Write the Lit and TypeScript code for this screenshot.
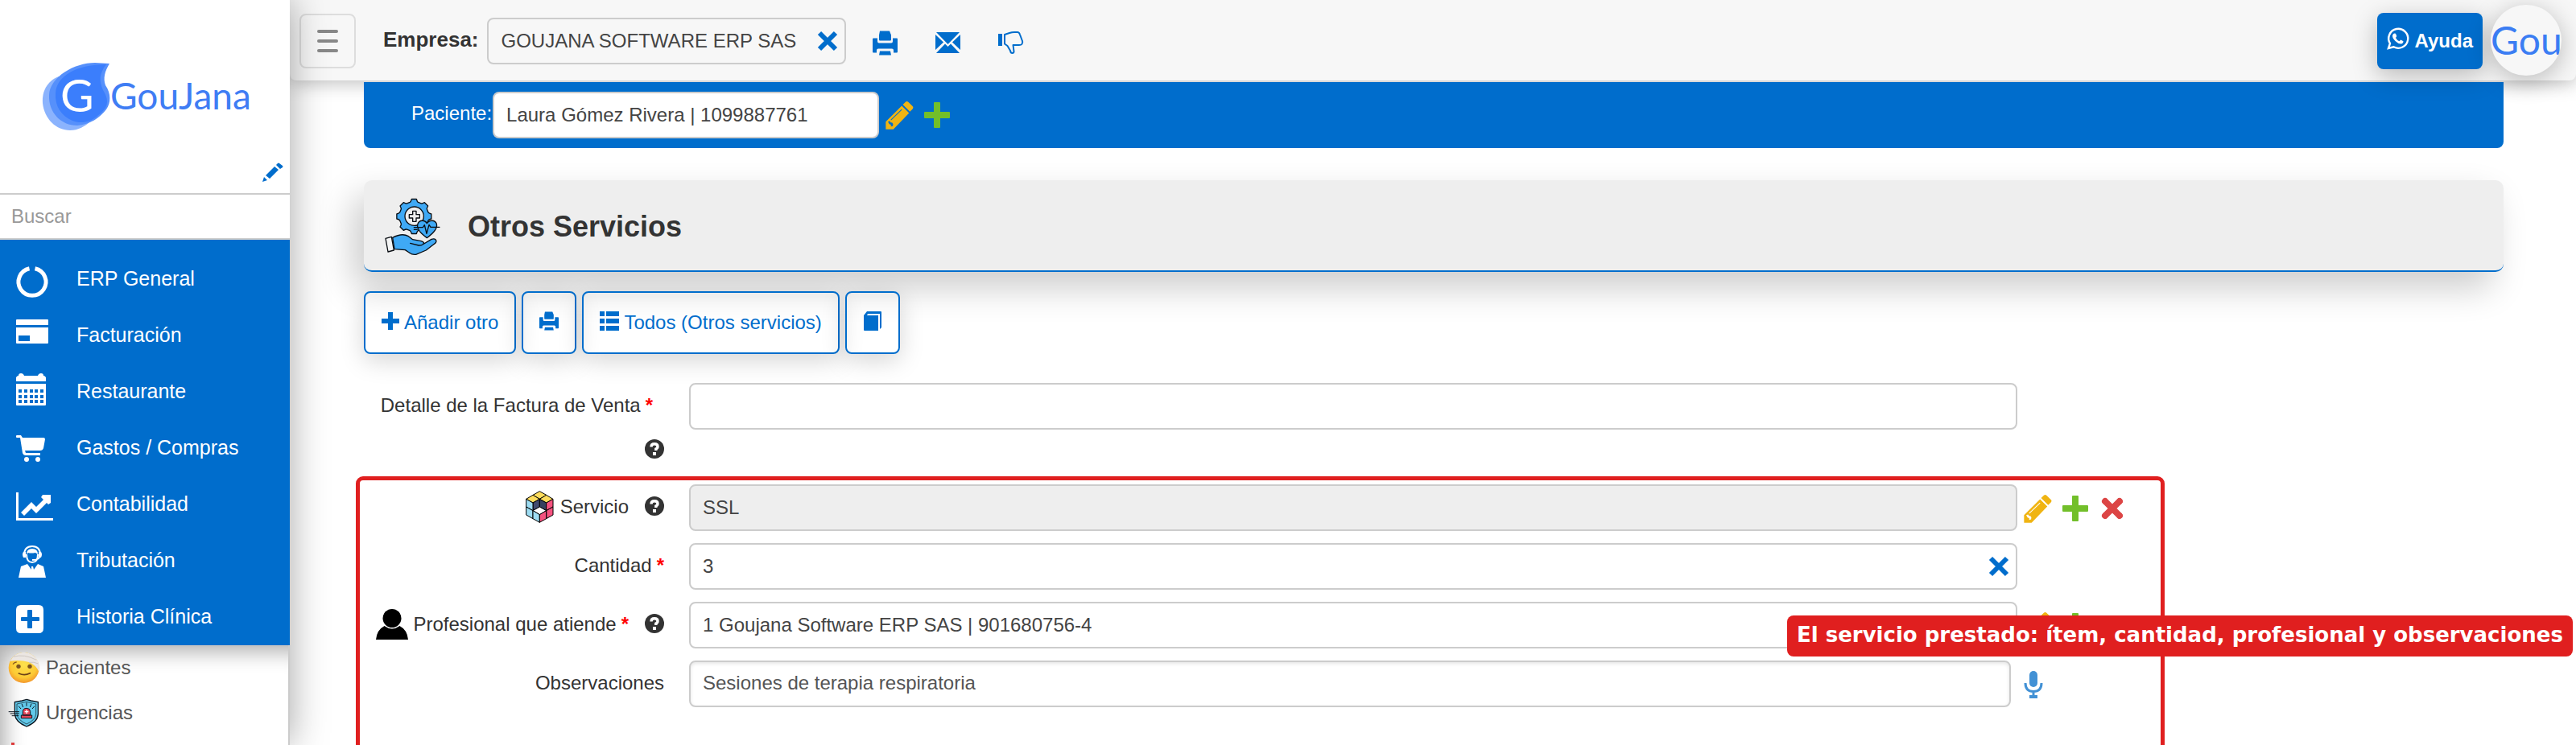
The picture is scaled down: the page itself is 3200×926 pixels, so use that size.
import { LitElement, html, svg, css, nothing } from "lit";
import { customElement } from "lit/decorators.js";

/* ---------- shared icons ---------- */

const closeIcon = html`<svg width="26" height="26" viewBox="0 0 26 26" aria-hidden="true">
  <path d="M3 3L23 23M23 3L3 23" stroke="#006dcc" stroke-width="6" /></svg>`;

const printIcon = (size: number) => html`<svg width=${size} height=${size} viewBox="0 0 31 30" aria-hidden="true">
  <path fill="#006dcc" d="M9 0H21L23 5V11Q23 12 22 12H9Q8 12 8 11V5ZM1 9H6V13Q6 15 8 15H23Q25 15 25 13V9H30Q31 9 31 10V26Q31 27 30 27H26V24Q26 22 24 22H7Q5 22 5 24V27H1Q0 27 0 26V10Q0 9 1 9ZM9 25H22L23 30H8Z" /></svg>`;

const mailIcon = html`<svg width="31" height="26" viewBox="0 0 31 26" aria-hidden="true">
  <path fill="#006dcc" d="M1 0H30L15.500 15ZM0 3L10 12.500L0 22ZM31 3V22L21 12.500ZM1 26L12 14.500L15.500 18L19 14.500L30 26Z" /></svg>`;

const thumbIcon = html`<svg width="31" height="28" viewBox="0 0 31 28" aria-hidden="true">
  <path fill="#006dcc" d="M0 3H5V18H0Z" />
  <path fill="none" stroke="#006dcc" stroke-width="2" stroke-linejoin="round"
    d="M8 4L14 2Q17 1 20 1H24Q26 1 27 4L30 12Q31 17 26 17H18.500L19.500 25Q19.500 27 17.500 27Q15.500 27 15 24L11.500 18L8 15.500Z" /></svg>`;

const editIcon = (line: string) => html`<svg width="35" height="35" viewBox="344 165 104 104" aria-hidden="true">
  <path fill="#f0b412" d="M345 240L404 181L431 208L373 268H345ZM408 177L418 167Q423 163 428 167L444 183Q449 188 444 193L434 203Z" />
  <path fill="none" stroke=${line} stroke-width="3" d="M364 234L404 195" />
  <path fill=${line} d="M353 240L360 238L364 244L368 243L372 248L371 256L364 258L364 251L358 249Z" /></svg>`;

const addIcon = html`<svg width="32" height="32" viewBox="0 0 32 32" aria-hidden="true">
  <path fill="#72bf2a" d="M13 0H19Q20 0 20 1V12H31Q32 12 32 13V19Q32 20 31 20H20V31Q20 32 19 32H13Q12 32 12 31V20H1Q0 20 0 19V13Q0 12 1 12H12V1Q12 0 13 0Z" /></svg>`;

const removeIcon = html`<svg width="32" height="28" viewBox="-3 0 32 28" aria-hidden="true">
  <path d="M5 5L23 23M23 5L5 23" stroke="#dc4545" stroke-width="8" stroke-linecap="round" />
  <path d="M4 6L6 4M22 4L24 6M24 22L22 24M6 24L4 22" stroke="#dc4545" stroke-width="5" stroke-linecap="round" /></svg>`;

const micIcon = html`<svg width="24" height="34" viewBox="0 0 24 34" aria-hidden="true">
  <rect x="7" y="0" width="10" height="20" rx="5" fill="#4291d5" />
  <path d="M2 15Q2 25.500 12 25.500Q22 25.500 22 15M12 26V32" fill="none" stroke="#4291d5" stroke-width="3" />
  <path d="M7 30H17V34H7Z" fill="#4291d5" /></svg>`;

const plusIcon = html`<svg width="22" height="22" viewBox="0 0 22 22" aria-hidden="true">
  <path d="M8 0H14V8H22V14H14V22H8V14H0V8H8Z" fill="#006dcc" /></svg>`;

const listIcon = html`<svg width="24" height="24" viewBox="0 0 24 24" aria-hidden="true">
  <path d="M0 0H6V6H0ZM8 0H24V6H8ZM0 9H6V15H0ZM8 9H24V15H8ZM0 18H6V24H0ZM8 18H24V24H8Z" fill="#006dcc" /></svg>`;

const bookIcon = html`<svg width="24" height="24" viewBox="0 0 24 24" aria-hidden="true">
  <path d="M1 5L5 0H22Q23 0 23 1V20L21 22V3H6L5 5H19V24H2Q1 24 1 23Z" fill="#006dcc" /></svg>`;

const whatsappIcon = html`<svg width="28" height="28" viewBox="0 0 28 28" aria-hidden="true">
  <path d="M2 26L4 20A12 12 0 1 1 8.500 24.300Z" fill="none" stroke="#fff" stroke-width="2.400" />
  <path d="M9 7.500L11 7.800L12.300 11L11 13Q12.500 16 15.500 17.300L17.300 15.500L20.500 17.200Q20.500 20 17.500 20.600Q14 20.600 10.500 17Q7 13.500 7 10.500Q7.200 8.500 9 7.500Z" fill="#fff" /></svg>`;

const pencilIcon = html`<svg width="26" height="24" viewBox="0 0 26 24" aria-hidden="true">
  <path d="M0 24L2 18L6 22ZM4 16L15 5L20 9L9 20ZM17 3L19 1Q20 0 21 1L25 4Q26 5 25 6L22 8Z" fill="#006dcc" /></svg>`;

const helpIcon = html`<svg width="24" height="24" viewBox="0 0 24 24" aria-hidden="true">
  <circle cx="12" cy="12" r="12" fill="#333" />
  <path d="M8 9.500Q8 5.800 12 5.800Q16 5.800 16 9Q16 11 13.800 12V14" fill="none" stroke="#fff" stroke-width="3.400" />
  <path d="M10 16H14V20H10Z" fill="#fff" /></svg>`;

const personIcon = html`<svg width="40" height="38" viewBox="0 0 40 38" aria-hidden="true">
  <circle cx="20" cy="11.500" r="11.500" /><path d="M0 38Q1 26 10.500 21Q20 28 29.500 21Q39 26 40 38Z" /></svg>`;

const cubeFaces: [string, string][] = [
  ["#fddc5c", "714,458 739,472 714,487 689,472"],
  ["#fddc5c", "689,472 714,487 689,501 664,487"],
  ["#fddc5c", "739,472 764,487 739,501 714,487"],
  ["#414b6e", "689,501 714,487 714,516 689,530"],
  ["#36405f", "714,487 739,501 739,530 714,516"],
  ["#ffffff", "714,516 739,530 714,545 689,530"],
  ["#9ddcf2", "664,487 689,501 689,530 664,516"],
  ["#9ddcf2", "664,516 689,530 689,560 664,546"],
  ["#9ddcf2", "689,530 714,545 714,574 689,560"],
  ["#f5527f", "739,501 764,487 764,516 739,530"],
  ["#f5527f", "739,530 764,516 764,546 739,560"],
  ["#f5527f", "714,545 739,530 739,560 714,574"],
];
const cubeIcon = html`<svg width="38" height="40" viewBox="660 456 112 120" aria-hidden="true">
  ${cubeFaces.map(([fill, points]) => svg`<polygon fill=${fill} points=${points} stroke="#000" stroke-width="3" stroke-linejoin="round" />`)}</svg>`;

const gearPath = (() => {
  const cx = 133, cy = 108, parts: string[] = [];
  const at = (r: number, deg: number) => {
    const a = ((deg - 90) * Math.PI) / 180;
    return `${(cx + r * Math.cos(a)).toFixed(1)} ${(cy + r * Math.sin(a)).toFixed(1)}`;
  };
  for (let i = 0; i < 8; i++) {
    const t = i * 45;
    parts.push(`${i ? "L" : "M"}${at(65, t - 8)}L${at(65, t + 8)}Q${at(56, t + 12)} ${at(55, t + 16)}L${at(55, t + 29)}Q${at(56, t + 33)} ${at(65, t + 37)}`);
  }
  return parts.join("") + "Z";
})();

const serviceIcon = html`<svg width="70" height="72" viewBox="24 39 210 216" aria-hidden="true">
  <g stroke="#0b0f14" stroke-width="4" stroke-linejoin="round" stroke-linecap="round">
    <path d=${gearPath} fill="#3fa9f5" />
    <circle cx="134" cy="107" r="35" fill="#eee" />
    <path d="M128 88H141V101H154V114H141V127H128V114H115V101H128Z" fill="#eee" />
    <path d="M181 188C150 166 142 150 147 136C153 120 173 120 181 134C190 120 211 120 217 136C221 150 211 166 181 188Z" fill="#3fa9f5" />
    <path d="M133 157H145M133 149H166L172 140L180 172L189 139L195 148H228" fill="none" stroke-width="4" />
    <path d="M27 190L49 184L58 234L36 240Z" fill="#f4f4f4" />
    <path d="M53 187C72 177 95 172 112 182L128 194L160 200Q170 203 170 210L198 193Q213 188 216 200Q216 206 208 211L178 234L140 250Q126 252 115 243L100 233L60 230Z" fill="#3fa9f5" />
    <path d="M119 208L150 216Q166 217 170 207" fill="none" />
  </g></svg>`;

/* ---------- sidebar artwork ---------- */

const ring = svg`<path d="M23.500 10.700A17 17 0 1 1 16.500 10.700" fill="none" stroke="#fff" stroke-width="5" />`;
const card = svg`<path fill="#fff" fill-rule="evenodd" d="M1 4H39Q40 4 40 5V11H0V5Q0 4 1 4ZM0 14H40V33Q40 34 39 34H1Q0 34 0 33ZM3 24V31H17V24Z" />`;
const calendar = svg`<path fill="#fff" d="M0 11V6L2 4H3Q3 1 6 1Q9 1 10 4H27Q28 1 31 1Q34 1 34 4H35L37 6V11ZM0 14H37V40Q37 41 36 41H1Q0 41 0 40Z" />
  ${[21, 28, 34].map((y) => [3, 10, 17, 23, 30].map((x) => svg`<rect x=${x} y=${y} width="4" height="4" fill="#006dcc" />`))}`;
const cart = svg`<path fill="#fff" d="M1 8H6L8 11H34Q36 11 36 13L34 24Q33 27 30 27H11L12 30H30V33H12Q9 33 8 30L5 11H1Q0 11 0 10V9Q0 8 1 8Z" />
  <circle cx="13" cy="38" r="3" fill="#fff" /><circle cx="27" cy="38" r="3" fill="#fff" />`;
const chart = svg`<path fill="#fff" d="M0 9H3V41H46V44H0ZM6 34L19 21L25 27L34 18L31 15L33 12H43V22L40 24L38 22L25 35L19 29L10 38Z" />`;
const agent = svg`<path d="M10 17Q10 6 20 6Q30 6 30 17" fill="none" stroke="#fff" stroke-width="2" />
  <path fill="#fff" d="M9 13H12V20H9Q7 16 9 13ZM31 13H28V20H31Q33 16 31 13ZM13 16Q13 9 20 9Q27 9 27 16L24 14Q18 15 15 14ZM3 45L6 31L14 28L19 35L19 31H21L22 35L27 28L34 31L37 45Z" />
  <path d="M13 16Q13 26 20 26Q27 26 27 16M29 20Q27 23 20 23" fill="none" stroke="#fff" stroke-width="2" />`;
const clinic = svg`<path fill="#fff" fill-rule="evenodd" d="M6 9H28Q34 9 34 15V38Q34 44 28 44H6Q0 44 0 38V15Q0 9 6 9ZM15 15Q14 15 14 16V24H7Q6 24 6 25V28Q6 29 7 29H14V37Q14 38 15 38H19Q20 38 20 37V29H28Q29 29 29 28V25Q29 24 28 24H20V16Q20 15 19 15Z" />`;

const modules = [
  { name: "ERP General", art: ring },
  { name: "Facturación", art: card },
  { name: "Restaurante", art: calendar },
  { name: "Gastos / Compras", art: cart },
  { name: "Contabilidad", art: chart },
  { name: "Tributación", art: agent },
  { name: "Historia Clínica", art: clinic },
];

const patientArt = html`<svg width="40" height="40" viewBox="30 31 120 120" aria-hidden="true">
  <defs><radialGradient id="face" cx="50%" cy="40%" r="60%">
    <stop offset="0" stop-color="#fde14e" /><stop offset="0.700" stop-color="#fcca34" /><stop offset="1" stop-color="#f3982c" />
  </radialGradient></defs>
  <circle cx="89" cy="91" r="57" fill="url(#face)" />
  <path d="M38 66Q52 36 88 33Q128 36 142 68Q148 84 145 106Q136 82 108 70Q74 60 38 66Z" fill="#ebe6e2" />
  <path d="M50 50Q90 38 136 62M108 71Q126 68 143 76" stroke="#cfc8c2" stroke-width="3" fill="none" />
  <path d="M48 78Q54 70 62 70" stroke="#8a5a20" stroke-width="4" fill="none" />
  <ellipse cx="69" cy="86" rx="8" ry="8" fill="#7a5320" /><ellipse cx="111" cy="86" rx="8" ry="8" fill="#7a5320" />
  <path d="M70 112Q92 122 112 111" stroke="#6b4218" stroke-width="5" fill="none" stroke-linecap="round" /></svg>`;

const urgentArt = html`<svg width="40" height="36" viewBox="28 203 120 108" aria-hidden="true">
  <path d="M97 207L114 212L140 217V262Q138 292 97 308Q56 292 53 262V217L80 212Z" fill="#62c9ea" stroke="#0d1822" stroke-width="4" />
  <path d="M97 216L132 224V262Q130 284 97 299Q64 284 61 262V224Z" fill="none" stroke="#0d1822" stroke-width="2" />
  <path d="M97 219V232M79 223L84 236M115 223L110 236M67 232L76 242M127 232L118 242M30 253H70M36 260H70M42 268H68" stroke="#0d1822" stroke-width="3" />
  <path d="M83 266V252Q84 240 97 240Q110 240 111 252V266ZM77 266H117V277H77Z" fill="#e4485a" stroke="#0d1822" stroke-width="3" />
  <path d="M97 246V260M90 253H104" stroke="#fff" stroke-width="4" /></svg>`;

const thermoArt = html`<svg width="40" height="38" viewBox="-4 0 40 38" aria-hidden="true">
  <path d="M0 0H4V24Q8 28 4 33Q2 36 0 33Q-4 28 0 24Z" fill="#dc3b3b" /></svg>`;

const sections = [
  { name: "Pacientes", art: patientArt },
  { name: "Urgencias", art: urgentArt },
  { name: "", art: thermoArt },
];

/* ---------- components ---------- */

const base = css`
  * { box-sizing: border-box; }
  :host { font-family: "Liberation Sans", Arial, sans-serif; font-size: 24px; color: #333; }
  svg { display: block; flex: none; overflow: visible; }
  a { color: inherit; text-decoration: none; }
  button { font: inherit; color: inherit; background: none; border: 0; padding: 0; margin: 0; cursor: pointer; }
  input { font: inherit; min-width: 0; }
`;

@customElement("side-menu")
export class SideMenu extends LitElement {
  static styles = [
    base,
    css`
      :host { display: flex; flex-direction: column; height: 100vh; overflow: hidden; background: #fff; }
      .brand { height: 240px; flex: none; display: flex; flex-direction: column; padding: 78px 8px 12px 52px; }
      .pencil { align-self: flex-end; margin-top: 40px; }
      .logo text { font-family: Lato, sans-serif; }
      .search { flex: none; height: 58px; width: 100%; border: solid #ccc; border-width: 2px 0; padding: 0 14px; background: #fff; outline: 0; }
      .search::placeholder { color: #999; opacity: 1; }
      nav { flex: none; background: #006dcc; color: #fff; padding-top: 14px; }
      ul { list-style: none; margin: 0; padding: 0; }
      .module { display: flex; align-items: center; gap: 27px; height: 70px; padding-left: 20px; font-size: 25px; }
      .module span { padding-bottom: 2px; }
      .sections { flex: 1; min-height: 0; overflow: hidden; border-right: 2px solid #ccc; box-shadow: inset 16px 18px 26px -10px rgba(0, 0, 0, 0.32); }
      .section { display: flex; align-items: center; gap: 7px; height: 56px; padding-left: 10px; color: #555; }
    `,
  ];

  render() {
    return html`
      <div class="brand">
        <svg class="logo" width="260" height="84" viewBox="0 0 260 84" role="img" aria-label="GouJana">
          <path d="M21 17C6 23 0 36 1 50C3 70 18 84 35 84C45 84 54 79 60 73L70 60Z" fill="#8bb3fd" />
          <path d="M84 1C78 11 76 19 79 28C86 38 86 50 80 58C72 68 60 77 44 78C24 78 8 62 9 40C10 18 40 0 66 0Z" fill="#5690fb" />
          <path d="M80 2C71 14 71 22 76 34C86 50 80 58 68 67C60 74 48 76 38 72C24 66 16 54 17 38C18 16 44 2 80 2Z" fill="#3b7efc" />
          <text x="23" y="61" font-size="57" fill="#fff">G</text>
          <text x="85" y="58" font-size="46" fill="#3f7df4">GouJana</text>
        </svg>
        <button class="pencil" aria-label="Editar logo">${pencilIcon}</button>
      </div>
      <input class="search" type="search" placeholder="Buscar" aria-label="Buscar" />
      <nav><ul>
        ${modules.map((m) => html`<li><a class="module" href="#"><svg width="48" height="48" viewBox="0 0 48 48" aria-hidden="true">${m.art}</svg><span>${m.name}</span></a></li>`)}
      </ul></nav>
      <ul class="sections">
        ${sections.map((s) => html`<li><a class="section" href="#">${s.art}<span>${s.name}</span></a></li>`)}
      </ul>
    `;
  }
}

@customElement("top-bar")
export class TopBar extends LitElement {
  static styles = [
    base,
    css`
      :host { display: flex; align-items: center; height: 100px; padding: 2px 18px 0 12px; background: #f7f7f7;
        border-radius: 0 0 8px 8px; box-shadow: 0 4px 22px rgba(0, 0, 0, 0.25); }
      .toggle { width: 70px; height: 68px; border: 2px solid #ddd; border-radius: 8px; display: flex; flex-direction: column;
        align-items: center; justify-content: center; gap: 8px; }
      .line { width: 26px; height: 4px; border-radius: 2px; background: #888; }
      .caption { font-size: 26px; font-weight: bold; margin: 0 10px 4px 34px; }
      .company { display: flex; align-items: center; width: 446px; height: 58px; border: 2px solid #ccc; border-radius: 8px; padding: 0 8px 0 16px; }
      .company input { flex: 1; border: 0; background: none; color: #444; padding: 0; outline: 0; }
      .tools { display: flex; align-items: center; gap: 47px; margin: 4px auto 0 33px; }
      .help { display: flex; align-items: center; gap: 7px; height: 70px; padding: 0 12px; border-radius: 8px; background: #006dcc;
        color: #fff; font-weight: bold; box-shadow: 0 8px 30px rgba(0, 0, 0, 0.25); }
      .help svg { margin-bottom: 6px; }
      .avatar { margin: 0 0 2px 10px; width: 88px; height: 88px; border-radius: 50%; overflow: hidden; background: #f7f7f7;
        box-shadow: 0 6px 30px rgba(0, 0, 0, 0.25); font: 48px/76px Lato, sans-serif; color: #3b7df3; text-align: center; }
    `,
  ];

  render() {
    return html`
      <button class="toggle" aria-label="Menú"><span class="line"></span><span class="line"></span><span class="line"></span></button>
      <label class="caption" for="company">Empresa:</label>
      <div class="company">
        <input id="company" .value=${"GOUJANA SOFTWARE ERP SAS"} />
        <button aria-label="Limpiar empresa">${closeIcon}</button>
      </div>
      <div class="tools">
        <button aria-label="Imprimir">${printIcon(31)}</button>
        <button aria-label="Correo">${mailIcon}</button>
        <button aria-label="No me gusta">${thumbIcon}</button>
      </div>
      <button class="help">${whatsappIcon}<span>Ayuda</span></button>
      <button class="avatar" aria-label="Cuenta Gou">Gou</button>
    `;
  }
}

interface Field {
  id: string;
  label: string;
  value: string;
  icon?: unknown;
  required?: boolean;
  help?: boolean;
  disabled?: boolean;
  clear?: boolean;
  area?: boolean;
  actions?: string[];
}

const detailField: Field = { id: "detalle", label: "Detalle de la Factura de Venta", value: "", required: true, help: true };

const serviceFields: Field[] = [
  { id: "servicio", label: "Servicio", value: "SSL", icon: cubeIcon, help: true, disabled: true, actions: ["edit", "add", "remove"] },
  { id: "cantidad", label: "Cantidad", value: "3", required: true, clear: true },
  { id: "profesional", label: "Profesional que atiende", value: "1 Goujana Software ERP SAS | 901680756-4", icon: personIcon, required: true, help: true, actions: ["edit", "add"] },
  { id: "observaciones", label: "Observaciones", value: "Sesiones de terapia respiratoria", area: true, actions: ["mic"] },
];

@customElement("service-form")
export class ServiceForm extends LitElement {
  static styles = [
    base,
    css`
      :host { display: block; position: relative; }
      form { display: block; }
      .row { display: grid; grid-template-columns: 404px minmax(0, 1fr) 183px; align-items: start; }
      .detail { padding-left: 10px; margin-bottom: 10px; }
      .group { border: 5px solid #e01f1f; border-radius: 9px; padding: 5px 0 80px 5px; display: grid; gap: 13px; }
      .group .row { grid-template-columns: 404px minmax(0, 1fr) 178px; }
      .name { display: flex; flex-wrap: wrap; justify-content: flex-end; align-items: center; min-height: 56px; padding-right: 31px; }
      label { display: flex; align-items: center; gap: 6px; white-space: nowrap; }
      .detail label { margin-right: 14px; }
      .hint { margin: 0 0 2px 20px; }
      .detail .name { row-gap: 28px; min-height: 106px; padding-top: 14px; align-content: flex-start; }
      .star { color: #f00; font-weight: bold; }
      .box { display: flex; align-items: center; height: 58px; border: 2px solid #ccc; border-radius: 8px; background: #fff; padding: 0 8px 0 15px; }
      .box.disabled { background: #eee; }
      .box.area { box-shadow: inset 0 2px 4px rgba(0, 0, 0, 0.1); margin-right: 8px; }
      .box input, .box textarea { flex: 1; border: 0; background: none; padding: 0; color: #444; outline: 0; font: inherit; resize: none; min-width: 0; }
      .box textarea { height: 30px; line-height: 28px; color: #555; overflow: hidden; }
      .actions { display: flex; align-items: center; gap: 13px; height: 60px; padding-left: 8px; }
      .note { position: absolute; left: 1778px; top: 289px; height: 51px; padding: 0 12px; border-radius: 8px; background: #e01f1f; color: #fff;
        font: bold 26px/48px "DejaVu Sans", sans-serif; white-space: nowrap; }
    `,
  ];

  action(kind: string, name: string) {
    const icons: Record<string, [unknown, string]> = {
      edit: [editIcon("#fff"), "Editar"],
      add: [addIcon, "Añadir"],
      remove: [removeIcon, "Quitar"],
      mic: [micIcon, "Dictar"],
    };
    const [icon, verb] = icons[kind];
    return html`<button type="button" aria-label="${verb} ${name}">${icon}</button>`;
  }

  row(f: Field, extra = "") {
    return html`<div class="row ${extra}">
      <div class="name">
        <label for=${f.id}>${f.icon ?? nothing}<span>${f.label}</span>${f.required ? html`<span class="star">*</span>` : nothing}</label>
        ${f.help ? html`<button type="button" class="hint" aria-label="Ayuda ${f.label}">${helpIcon}</button>` : nothing}
      </div>
      <div class="box ${f.disabled ? "disabled" : ""} ${f.area ? "area" : ""}">
        ${f.area
          ? html`<textarea id=${f.id} rows="1" .value=${f.value}></textarea>`
          : html`<input id=${f.id} type="text" .value=${f.value} ?readonly=${f.disabled} />`}
        ${f.clear ? html`<button type="button" aria-label="Limpiar ${f.label}">${closeIcon}</button>` : nothing}
      </div>
      <div class="actions">${(f.actions ?? []).map((a) => this.action(a, f.label))}</div>
    </div>`;
  }

  render() {
    return html`<form>
      ${this.row(detailField, "detail")}
      <div class="group">${serviceFields.map((f) => this.row(f))}</div>
      <div class="note" role="note">El servicio prestado: ítem, cantidad, profesional y observaciones</div>
    </form>`;
  }
}

@customElement("app-root")
export class AppRoot extends LitElement {
  static styles = [
    base,
    css`
      :host { display: grid; grid-template-columns: 360px minmax(0, 1fr); height: 100vh; overflow: hidden; background: #fff; }
      side-menu { position: relative; z-index: 2; box-shadow: 0 0 44px rgba(0, 0, 0, 0.36); }
      .page { min-width: 0; }
      main { padding: 2px 90px 0 92px; }
      .patient { display: flex; align-items: center; background: #006dcc; border-radius: 0 0 8px 8px; padding: 12px 0 12px 59px; }
      .patient label { color: #fff; margin: 0 1px 4px 0; }
      .patient input { width: 480px; height: 58px; border: 2px solid #ccc; border-radius: 8px; padding: 0 15px; color: #444; background: #fff; outline: 0; }
      .patient .edit { margin: 0 13px 0 8px; }
      .heading { display: flex; align-items: center; gap: 33px; height: 114px; margin-top: 40px; padding-left: 26px; background: #eee;
        border-bottom: 2px solid #006dcc; border-radius: 10px; box-shadow: -14px 20px 44px rgba(0, 0, 0, 0.2); }
      .heading svg { margin-top: 4px; }
      h1 { font-size: 36px; margin: 0; padding-top: 3px; }
      .toolbar { display: flex; gap: 7px; margin-top: 24px; }
      .tool { display: flex; align-items: center; gap: 6px; height: 78px; padding: 0 20px; border: 2px solid #006dcc; border-radius: 8px;
        color: #006dcc; box-shadow: 0 8px 30px rgba(0, 0, 0, 0.17); }
      .tool svg { margin-bottom: 4px; }
      .area { display: grid; grid-template-columns: 16fr 3fr; margin: 36px 0 0 -10px; }
    `,
  ];

  render() {
    return html`
      <side-menu></side-menu>
      <div class="page">
        <top-bar></top-bar>
        <main>
          <div class="patient">
            <label for="patient">Paciente:</label>
            <input id="patient" type="text" .value=${"Laura Gómez Rivera | 1099887761"} />
            <button class="edit" aria-label="Editar paciente">${editIcon("#006dcc")}</button>
            <button aria-label="Añadir paciente">${addIcon}</button>
          </div>
          <header class="heading">${serviceIcon}<h1>Otros Servicios</h1></header>
          <div class="toolbar">
            <button class="tool">${plusIcon}<span>Añadir otro</span></button>
            <button class="tool" aria-label="Imprimir">${printIcon(24)}</button>
            <button class="tool">${listIcon}<span>Todos (Otros servicios)</span></button>
            <button class="tool" aria-label="Manual">${bookIcon}</button>
          </div>
          <div class="area"><service-form></service-form></div>
        </main>
      </div>
    `;
  }
}
